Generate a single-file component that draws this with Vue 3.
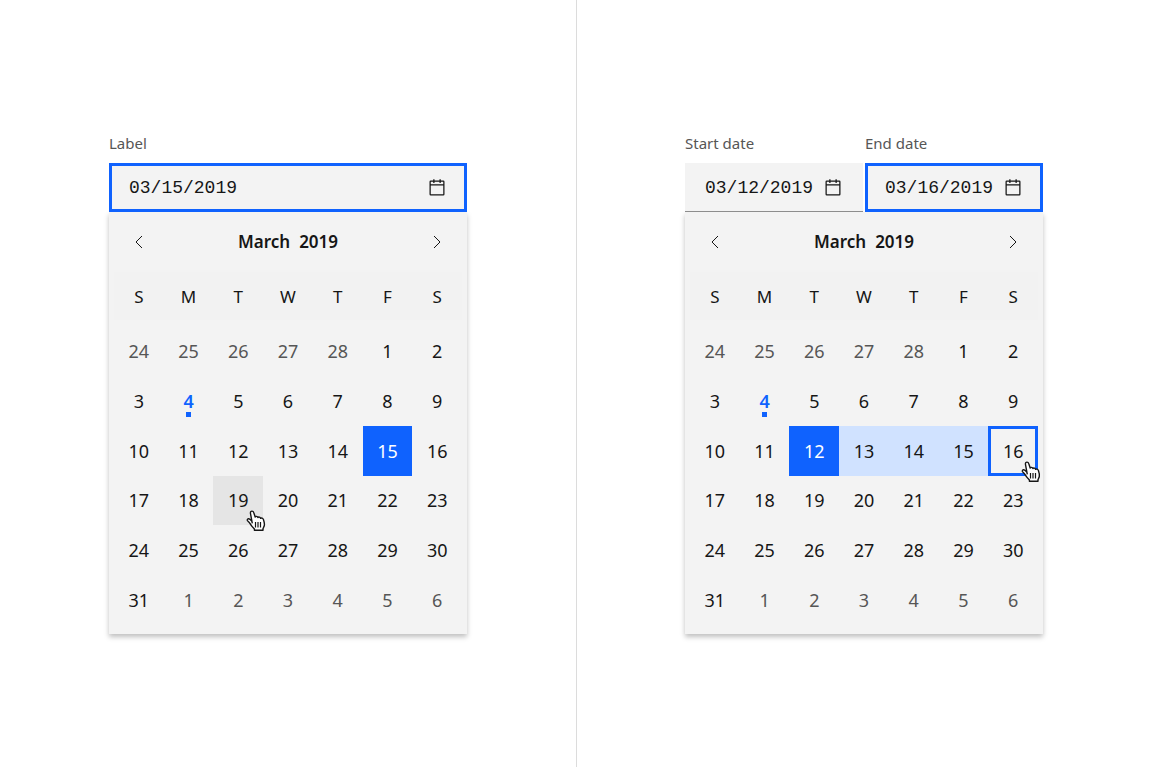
<script setup>
import { ref } from 'vue'

const weekdays = ['S', 'M', 'T', 'W', 'T', 'F', 'S']

function buildMonth(states) {
  const days = []
  for (let d = 24; d <= 28; d++) days.push({ day: d, state: 'outside' })
  for (let d = 1; d <= 31; d++) days.push({ day: d, state: states[d] || '' })
  for (let d = 1; d <= 6; d++) days.push({ day: d, state: 'outside' })
  const weeks = []
  for (let i = 0; i < days.length; i += 7) weeks.push(days.slice(i, i + 7))
  return weeks
}

const pickers = ref([
  {
    id: 'single',
    fields: [{ id: 'date', label: 'Label', value: '03/15/2019', focused: true }],
    weeks: buildMonth({ 4: 'today', 15: 'selected', 19: 'hover' }),
    cursorDay: 19,
  },
  {
    id: 'range',
    fields: [
      { id: 'start', label: 'Start date', value: '03/12/2019', focused: false },
      { id: 'end', label: 'End date', value: '03/16/2019', focused: true },
    ],
    weeks: buildMonth({ 4: 'today', 12: 'selected', 13: 'between', 14: 'between', 15: 'between', 16: 'outlined' }),
    cursorDay: 16,
  },
])
</script>

<template>
  <main class="page">
    <section v-for="picker in pickers" :key="picker.id" class="half">
      <div class="picker">
        <div class="fields">
          <div v-for="field in picker.fields" :key="field.id" class="field">
            <label class="field-label" :for="field.id">{{ field.label }}</label>
            <div class="control" :class="{ focused: field.focused }">
              <input :id="field.id" v-model="field.value" class="input" type="text" />
              <svg class="calendar-icon" viewBox="0 0 32 32" aria-hidden="true">
                <path d="M26 4h-4V2h-2v2h-8V2h-2v2H6a2 2 0 0 0-2 2v20a2 2 0 0 0 2 2h20a2 2 0 0 0 2-2V6a2 2 0 0 0-2-2zm0 22H6V12h20zm0-16H6V6h4v2h2V6h8v2h2V6h4z" />
              </svg>
            </div>
          </div>
        </div>

        <div class="panel">
          <header class="month-bar">
            <button class="nav" type="button" aria-label="Previous month">
              <svg viewBox="0 0 20 20" aria-hidden="true"><path d="m13 4-6 6 6 6" /></svg>
            </button>
            <h2 class="month"><span>March</span><span>2019</span></h2>
            <button class="nav" type="button" aria-label="Next month">
              <svg viewBox="0 0 20 20" aria-hidden="true"><path d="m7 4 6 6-6 6" /></svg>
            </button>
          </header>

          <table class="calendar">
            <thead>
              <tr class="weekdays">
                <th v-for="(name, i) in weekdays" :key="i" scope="col">{{ name }}</th>
              </tr>
            </thead>
            <tbody>
              <tr v-for="(week, w) in picker.weeks" :key="w">
                <td v-for="(cell, c) in week" :key="c">
                  <button type="button" class="day" :class="cell.state">{{ cell.day }}</button>
                  <svg
                    v-if="cell.day === picker.cursorDay"
                    class="cursor"
                    viewBox="0 0 20 22"
                    aria-hidden="true"
                  >
                    <path
                      class="hand"
                      d="M6.3 13.4 4.5 3.600C4.200 1.900 5 1.100 6 1.100c.9 0 1.500.6 1.800 1.600L9.200 7c.3-.9 2.200-.9 2.700.5.7-.8 2.300-.5 2.700.8.9-.6 2.300-.2 2.800 1.100.7 2 1.400 4 .9 6.100-.3 1.400-1 2.200-1.300 3.200v1.600H8.400v-1.400c-1.500-1.500-3.300-3.400-4.500-5.600-.6-1-1.700-1.800-2.400-2.700-.6-.9.2-2 1.300-1.800 1.200.2 2.200 1.500 3 2.400"
                    />
                    <path class="lines" d="M9.500 12v5.500M12 12v5.500M14.500 12v5.500" />
                  </svg>
                </td>
              </tr>
            </tbody>
          </table>
        </div>
      </div>
    </section>
  </main>
</template>

<style>
body {
  margin: 0;
  background: #fff;
}
</style>

<style scoped>
.page {
  display: grid;
  grid-template-columns: 1fr 1fr;
  min-height: 100vh;
  color: #161616;
  font-family: "Noto Sans", "Open Sans", sans-serif;
  font-size: 18px;
}

.half {
  display: flex;
  align-items: center;
  justify-content: center;
}

.half + .half {
  box-shadow: inset 1px 0 #dcdcdc;
}

.picker {
  width: 100%;
  max-width: 358px;
}

.fields {
  position: relative;
  display: flex;
  gap: 2px;
}

.field {
  flex: 1;
  min-width: 0;
}

.field-label {
  display: block;
  margin-bottom: 10px;
  color: #565656;
  font-size: 15px;
  line-height: 20px;
}

.control {
  display: flex;
  align-items: center;
  box-sizing: border-box;
  height: 49px;
  padding: 1px 20px 0;
  background: #f3f3f3;
  border-bottom: 1px solid #8d8d8d;
}

.control.focused {
  padding: 0 17px;
  border: 3px solid #0f62fe;
}

.input {
  flex: 1;
  min-width: 0;
  padding: 0;
  border: 0;
  outline: 0;
  background: none;
  color: #161616;
  font-family: "Liberation Mono", monospace;
  font-size: 18px;
  line-height: 24px;
}

.calendar-icon {
  flex: none;
  width: 20px;
  height: 20px;
  fill: #161616;
}

.panel {
  padding: 0 5px 9px;
  background: #f3f3f3;
  box-shadow: 0 3px 5px rgba(0, 0, 0, 0.25);
}

.month-bar {
  display: flex;
  align-items: center;
  justify-content: space-between;
  height: 60px;
}

.nav {
  display: grid;
  place-items: center;
  width: 50px;
  height: 50px;
  padding: 0;
  border: 0;
  background: none;
}

.nav svg {
  width: 20px;
  height: 20px;
  fill: none;
  stroke: #161616;
}

.month {
  display: flex;
  gap: 9px;
  margin: 0;
  font-size: 17px;
  font-weight: 600;
  line-height: 24px;
}

.calendar {
  display: block;
}

.calendar thead,
.calendar tbody {
  display: block;
}

.calendar tr {
  display: grid;
  grid-template-columns: repeat(7, 1fr);
}

.calendar .weekdays {
  align-items: center;
  height: 48px;
  margin-bottom: 6px;
  background: #f2f2f2;
}

.calendar th {
  padding: 0;
  font-size: 17px;
  font-weight: 400;
  text-align: center;
}

.calendar td {
  position: relative;
  padding: 0;
  aspect-ratio: 1;
}

.day {
  display: block;
  position: relative;
  width: 100%;
  height: 100%;
  padding: 0;
  border: 0;
  background: none;
  color: #161616;
  font-family: inherit;
  font-size: 18px;
  text-align: center;
}

.day.outside {
  color: #565656;
}

.day.today {
  color: #0f62fe;
  font-weight: 600;
}

.day.today::after {
  content: "";
  position: absolute;
  bottom: 9px;
  left: 50%;
  width: 5px;
  height: 5px;
  margin-left: -3px;
  background: #0f62fe;
}

.day.selected {
  background: #0f62fe;
  color: #fff;
}

.day.between {
  background: #d0e2ff;
}

.day.hover {
  background: #e5e5e5;
}

.day.outlined {
  border: 3px solid #0f62fe;
}

.cursor {
  position: absolute;
  z-index: 1;
  right: -3px;
  bottom: -7px;
  width: 20px;
  height: 22px;
  overflow: visible;
  pointer-events: none;
}

.hand {
  fill: #fff;
  stroke: #161616;
  stroke-width: 1.4;
  stroke-linejoin: round;
}

.lines {
  fill: none;
  stroke: #161616;
  stroke-width: 1.2;
}
</style>
